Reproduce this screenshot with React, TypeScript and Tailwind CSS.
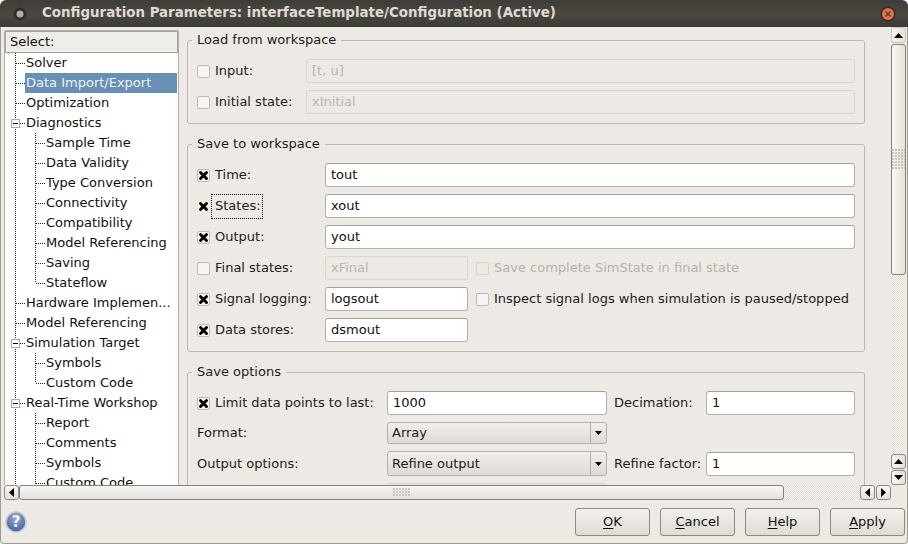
import type { ReactNode } from 'react';

interface TreeItem {
  label: string;
  depth: 0 | 1;
  expander?: boolean;
  last?: boolean;
  selected?: boolean;
}

const treeItems: TreeItem[] = [
  { label: 'Solver', depth: 0 },
  { label: 'Data Import/Export', depth: 0, selected: true },
  { label: 'Optimization', depth: 0 },
  { label: 'Diagnostics', depth: 0, expander: true },
  { label: 'Sample Time', depth: 1 },
  { label: 'Data Validity', depth: 1 },
  { label: 'Type Conversion', depth: 1 },
  { label: 'Connectivity', depth: 1 },
  { label: 'Compatibility', depth: 1 },
  { label: 'Model Referencing', depth: 1 },
  { label: 'Saving', depth: 1 },
  { label: 'Stateflow', depth: 1, last: true },
  { label: 'Hardware Implemen...', depth: 0 },
  { label: 'Model Referencing', depth: 0 },
  { label: 'Simulation Target', depth: 0, expander: true },
  { label: 'Symbols', depth: 1 },
  { label: 'Custom Code', depth: 1, last: true },
  { label: 'Real-Time Workshop', depth: 0, expander: true },
  { label: 'Report', depth: 1 },
  { label: 'Comments', depth: 1 },
  { label: 'Symbols', depth: 1 },
  { label: 'Custom Code', depth: 1 },
];

function TreeRow({ item }: { item: TreeItem }) {
  const guideWidth = item.depth === 0 ? 20 : 40;
  return (
    <div className="flex h-5 shrink-0 items-center pr-[1px]">
      <svg width={guideWidth} height="20" className="shrink-0" shapeRendering="crispEdges">
        <g stroke="#222" strokeDasharray="1 1" fill="none">
          <path d="M10.5 0V20" />
          {item.depth === 0 && <path d="M11 10.5H20" />}
          {item.depth === 1 && <path d={item.last ? 'M30.5 0V10' : 'M30.5 0V20'} />}
          {item.depth === 1 && <path d="M31 10.5H40" />}
        </g>
        {item.expander && (
          <g>
            <rect x="6.5" y="6.5" width="8" height="8" fill="#fff" stroke="#aaa" />
            <path d="M8 10.5H13" stroke="#000" />
          </g>
        )}
      </svg>
      <div
        className={`flex h-5 flex-1 items-center whitespace-nowrap pl-[1px] ${
          item.selected ? 'bg-[#6890b5] text-[#eef1f4]' : 'text-[#101010]'
        }`}
      >
        {item.label}
      </div>
    </div>
  );
}

function Checkbox({ checked, disabled, focused }: { checked?: boolean; disabled?: boolean; focused?: boolean }) {
  return (
    <span
      className={`flex h-[13px] w-[13px] shrink-0 items-center justify-center rounded-[2px] border ${
        focused
          ? 'border-[#f3ead8] bg-[#f8f0df]'
          : disabled
            ? 'border-[#d6d3cd] bg-[#edeae5]'
            : 'border-[#bfbbb4] bg-[#f6f5f3]'
      }`}
    >
      {checked && (
        <svg width="11" height="11" viewBox="0 0 11 11">
          <path d="M2.5 2.5L8.5 8.5M8.5 2.5L2.5 8.5" stroke="#000" strokeWidth="3" strokeLinecap="round" />
        </svg>
      )}
    </span>
  );
}

function CheckLabel({
  label,
  checked,
  disabled,
  focused,
  className,
}: {
  label: string;
  checked?: boolean;
  disabled?: boolean;
  focused?: boolean;
  className?: string;
}) {
  return (
    <div className={`flex h-6 items-center gap-[5px] ${className ?? ''}`}>
      <Checkbox checked={checked} disabled={disabled} focused={focused} />
      <span
        className={`flex h-[23px] items-center whitespace-nowrap ${
          focused ? '-ml-[3px] pr-[1px] pl-[3px] outline-1 outline-black outline-dotted' : ''
        } ${disabled ? 'text-[#b5b2ac]' : ''}`}
      >
        {label}
      </span>
    </div>
  );
}

function TextBox({ value, disabled, className }: { value: string; disabled?: boolean; className?: string }) {
  return (
    <div
      className={`flex h-6 items-center rounded-[3px] border pl-[5px] ${
        disabled
          ? 'border-[#d9d5cf] bg-[#edeae5] text-[#b9b6b0]'
          : 'border-[#b5b1aa] border-t-[#a5a19a] bg-white text-[#101010]'
      } ${className ?? ''}`}
    >
      {value}
    </div>
  );
}

function ComboBox({ value, tall }: { value: string; tall?: boolean }) {
  return (
    <div
      className={`flex w-[220px] items-center rounded-[3px] border border-[#b5b1aa] bg-gradient-to-b from-[#f1efeb] to-[#dedad4] ${
        tall ? 'h-[25px]' : 'h-[22px]'
      }`}
    >
      <span className="flex-1 pl-1">{value}</span>
      <span className="flex h-full w-4 items-center justify-center border-l border-[#b5b1aa]">
        <svg width="7" height="4" viewBox="0 0 7 4">
          <path d="M0 0H7L3.5 4Z" fill="#000" />
        </svg>
      </span>
    </div>
  );
}

function Group({ title, children, className }: { title: string; children: ReactNode; className?: string }) {
  return (
    <fieldset className={`mr-[26px] rounded-[3px] border border-[#bdb9b2] pr-[9px] pl-[9px] ${className ?? ''}`}>
      <legend className="-ml-[5px] px-[5px] leading-4">{title}</legend>
      {children}
    </fieldset>
  );
}

function Grip({ vertical }: { vertical?: boolean }) {
  const cols = vertical ? 5 : 6;
  const rows = vertical ? 7 : 3;
  const dots: ReactNode[] = [];
  for (let r = 0; r < rows; r++) {
    for (let c = 0; c < cols; c++) {
      dots.push(<rect key={`${r}-${c}`} x={c * 3} y={r * 3} width="2" height="2" fill="#c9c5be" />);
    }
  }
  return (
    <svg width={cols * 3} height={rows * 3} shapeRendering="crispEdges">
      {dots}
    </svg>
  );
}

function ScrollButton({ dir, className }: { dir: 'up' | 'down' | 'left' | 'right'; className?: string }) {
  const shapes = {
    up: 'M0 5H9L4.5 0Z',
    down: 'M0 0H9L4.5 5Z',
    left: 'M5 0V9L0 4.5Z',
    right: 'M0 0V9L5 4.5Z',
  };
  const vertical = dir === 'up' || dir === 'down';
  return (
    <div
      className={`flex h-[15px] w-[15px] shrink-0 items-center justify-center rounded-[3px] border border-[#8d8a84] ${
        vertical ? 'bg-gradient-to-r' : 'bg-gradient-to-b'
      } from-[#f8f7f5] to-[#e4e1db] ${className ?? ''}`}
    >
      <svg width={vertical ? 9 : 5} height={vertical ? 5 : 9} viewBox={vertical ? '0 0 9 5' : '0 0 5 9'}>
        <path d={shapes[dir]} fill="#000" />
      </svg>
    </div>
  );
}

function DialogButton({ before, mnemonic, after }: { before?: string; mnemonic: string; after: string }) {
  return (
    <div className="flex h-[28px] w-[75px] items-center justify-center rounded-[3px] border border-[#8d8a84] bg-gradient-to-b from-[#f3f1ee] to-[#dfdbd5] text-[#101010]">
      <span>
        {before}
        <span className="underline underline-offset-2">{mnemonic}</span>
        {after}
      </span>
    </div>
  );
}

export default function App() {
  return (
    <div className="flex h-[544px] w-[908px] flex-col overflow-hidden bg-white font-['DejaVu_Sans',sans-serif] text-[13px] text-[#1c1c1c]">
      <div className="flex h-[27px] shrink-0 items-center rounded-t-[6px] bg-gradient-to-b from-[#3f3d39] via-[#4a4740] to-[#3c3b37] pr-[12px] pl-[13px]">
        <svg width="14" height="14" viewBox="0 0 14 14">
          <circle cx="7" cy="7" r="6.5" fill="#2f2e2b" />
          <circle cx="7" cy="7" r="3.5" fill="#b3b0a9" />
        </svg>
        <div className="ml-[15px] flex-1 text-[13.4px] font-bold text-[#dfdbd2]">
          Configuration Parameters: interfaceTemplate/Configuration (Active)
        </div>
        <svg width="16" height="16" viewBox="0 0 16 16">
          <circle cx="8" cy="8" r="7.5" fill="#2f2e2b" />
          <circle cx="8" cy="8" r="6" fill="#ea7340" />
          <path d="M5.5 5.5L10.5 10.5M10.5 5.5L5.5 10.5" stroke="#55433a" strokeWidth="1.6" />
        </svg>
      </div>

      <div className="flex h-[517px] flex-col rounded-b-[4px] border-x border-b border-[#a29d90] bg-[#edeae5]">
        <div className="flex h-[458px] shrink-0 pr-[1px]">
          <div className="flex flex-1 pt-[3px] pl-[3px]">
            <div className="flex w-[175px] shrink-0 flex-col overflow-hidden rounded-t-[2px] border border-b-0 border-[#b5b1aa] bg-white">
              <div className="flex h-[22px] shrink-0 items-center border border-[#a5a19a] bg-[#efede9] pl-1 text-[#101010]">
                Select:
              </div>
              {treeItems.map((item, i) => (
                <TreeRow key={i} item={item} />
              ))}
            </div>
            <div className="flex-1 overflow-hidden pt-[2px] pl-[8px]">
              <Group title="Load from workspace" className="h-[92px]">
                <div className="flex flex-col gap-[7px] pt-[11px]">
                  <div className="flex items-center">
                    <CheckLabel label="Input:" className="w-[109px]" />
                    <TextBox value="[t, u]" disabled className="flex-1" />
                  </div>
                  <div className="flex items-center">
                    <CheckLabel label="Initial state:" className="w-[109px]" />
                    <TextBox value="xInitial" disabled className="flex-1" />
                  </div>
                </div>
              </Group>

              <Group title="Save to workspace" className="mt-[12px] h-[216px]">
                <div className="flex flex-col gap-[7px] pt-[11px]">
                  <div className="flex items-center">
                    <CheckLabel label="Time:" checked className="w-[128px]" />
                    <TextBox value="tout" className="flex-1" />
                  </div>
                  <div className="flex items-center">
                    <CheckLabel label="States:" checked focused className="w-[128px]" />
                    <TextBox value="xout" className="flex-1" />
                  </div>
                  <div className="flex items-center">
                    <CheckLabel label="Output:" checked className="w-[128px]" />
                    <TextBox value="yout" className="flex-1" />
                  </div>
                  <div className="flex items-center">
                    <CheckLabel label="Final states:" className="w-[128px]" />
                    <TextBox value="xFinal" disabled className="w-[143px]" />
                    <CheckLabel label="Save complete SimState in final state" disabled className="ml-[8px]" />
                  </div>
                  <div className="flex items-center">
                    <CheckLabel label="Signal logging:" checked className="w-[128px]" />
                    <TextBox value="logsout" className="w-[143px]" />
                    <CheckLabel label="Inspect signal logs when simulation is paused/stopped" className="ml-[8px]" />
                  </div>
                  <div className="flex items-center">
                    <CheckLabel label="Data stores:" checked className="w-[128px]" />
                    <TextBox value="dsmout" className="w-[143px]" />
                  </div>
                </div>
              </Group>

              <Group title="Save options" className="mt-[12px] h-[140px]">
                <div className="flex flex-col pt-[11px]">
                  <div className="flex items-center">
                    <CheckLabel label="Limit data points to last:" checked className="w-[190px]" />
                    <TextBox value="1000" className="w-[220px]" />
                    <span className="ml-[7px] w-[92px]">Decimation:</span>
                    <TextBox value="1" className="flex-1" />
                  </div>
                  <div className="mt-[7px] flex items-center">
                    <span className="w-[190px]">Format:</span>
                    <ComboBox value="Array" />
                  </div>
                  <div className="mt-[7px] flex items-center">
                    <span className="w-[190px]">Output options:</span>
                    <ComboBox value="Refine output" tall />
                    <span className="ml-[7px] w-[92px]">Refine factor:</span>
                    <TextBox value="1" className="flex-1" />
                  </div>
                  <div className="mt-[7px] ml-[190px] h-6 w-[220px] rounded-[3px] border border-[#d9d5cf] bg-[#e6e3de]" />
                </div>
              </Group>
            </div>
          </div>

          <div className="flex w-[15px] shrink-0 flex-col bg-[repeating-conic-gradient(#f6f5f3_0_25%,#e2dfd9_0_50%)] bg-[length:2px_2px]">
            <ScrollButton dir="up" className="h-[16px] border-[#c9c5be]" />
            <div className="mt-[1px] flex h-[231px] items-center justify-center rounded-[3px] border border-[#85827c] bg-gradient-to-r from-[#f8f7f5] to-[#e4e1db]">
              <Grip vertical />
            </div>
            <div className="flex-1" />
            <ScrollButton dir="up" />
            <ScrollButton dir="down" className="mt-[1px]" />
          </div>
        </div>

        <div className="flex h-[15px] shrink-0 pr-[16px] pl-[3px]">
          <div className="flex flex-1 bg-[repeating-conic-gradient(#f6f5f3_0_25%,#e2dfd9_0_50%)] bg-[length:2px_2px]">
            <ScrollButton dir="left" />
            <div className="flex w-[765px] items-center justify-center rounded-[3px] border border-[#85827c] bg-gradient-to-b from-[#f8f7f5] to-[#e4e1db]">
              <Grip />
            </div>
            <div className="flex-1" />
            <ScrollButton dir="left" />
            <ScrollButton dir="right" className="ml-[1px]" />
          </div>
        </div>

        <div className="flex flex-1 items-center pr-[2px] pl-[4px]">
          <svg width="22" height="22" viewBox="0 0 22 22" className="mt-[1px]">
            <defs>
              <radialGradient id="help" cx="50%" cy="30%" r="75%">
                <stop offset="0%" stopColor="#9aa9d0" />
                <stop offset="100%" stopColor="#3f5a96" />
              </radialGradient>
            </defs>
            <circle cx="11" cy="11" r="10" fill="url(#help)" stroke="#c9cbd2" strokeWidth="1.5" />
            <text x="11" y="16" textAnchor="middle" fontSize="15" fontWeight="bold" fill="#eef1f8">
              ?
            </text>
          </svg>
          <div className="ml-auto flex gap-[10px]">
            <DialogButton mnemonic="O" after="K" />
            <DialogButton mnemonic="C" after="ancel" />
            <DialogButton mnemonic="H" after="elp" />
            <DialogButton mnemonic="A" after="pply" />
          </div>
        </div>
      </div>
    </div>
  );
}
